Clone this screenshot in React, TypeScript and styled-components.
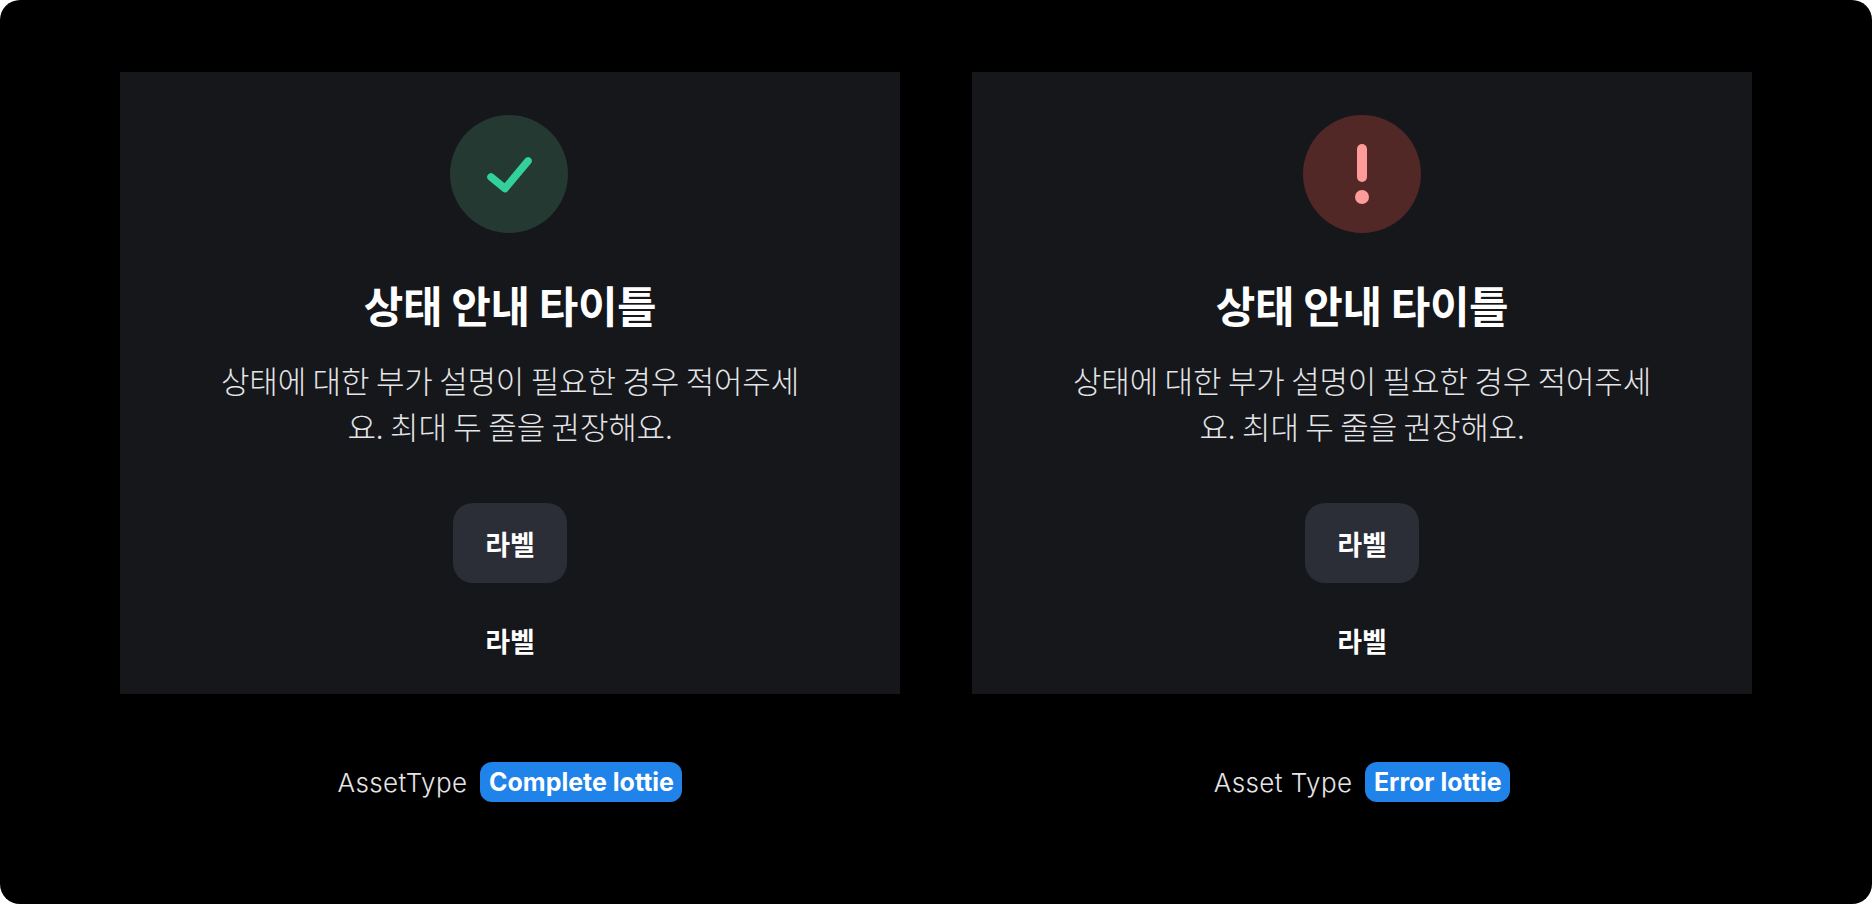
import React from "react";
import styled, { createGlobalStyle } from "styled-components";

const Global = createGlobalStyle`
  html, body { margin: 0; padding: 0; background: #fff; }
  body { font-family: Inter, "Noto Sans CJK KR", sans-serif; }
`;

const Frame = styled.main`
  width: 1872px;
  height: 904px;
  box-sizing: border-box;
  padding: 72px 120px 0;
  background: #000;
  border-radius: 20px;
  display: grid;
  grid-template-columns: 780px 780px;
  column-gap: 72px;
  align-content: start;
`;

const Column = styled.section`
  display: flex;
  flex-direction: column;
  align-items: center;
`;

const Panel = styled.div`
  width: 780px;
  height: 622px;
  box-sizing: border-box;
  padding-top: 43px;
  background: #16171b;
  display: flex;
  flex-direction: column;
  align-items: center;
`;

const Circle = styled.div<{ $bg: string; $nudge: number }>`
  flex: none;
  width: 118px;
  height: 118px;
  margin-right: ${(p) => p.$nudge}px;
  border-radius: 50%;
  background: ${(p) => p.$bg};
  display: flex;
  align-items: center;
  justify-content: center;
`;

const Title = styled.h2`
  margin: 43px 0 0;
  font-family: "Noto Sans CJK KR", sans-serif;
  font-size: 43px;
  line-height: 56px;
  font-weight: 600;
  letter-spacing: -0.45px;
  color: #fff;
`;

const Description = styled.p`
  margin: 25px 0 0;
  width: 590px;
  font-family: "Noto Sans CJK KR", sans-serif;
  font-size: 31px;
  line-height: 46px;
  font-weight: 300;
  text-align: center;
  color: #e4e5e8;
  letter-spacing: -0.2px;
`;

const Primary = styled.button`
  flex: none;
  margin-top: 54px;
  width: 114px;
  height: 80px;
  border: 0;
  border-radius: 20px;
  background: #2c2e37;
  color: #fff;
  font-family: "Noto Sans CJK KR", sans-serif;
  font-size: 27px;
  font-weight: 600;
`;

const Ghost = styled(Primary)`
  margin-top: 17px;
  background: transparent;
`;

const Caption = styled.div`
  margin-top: 68px;
  height: 40px;
  display: flex;
  align-items: center;
  gap: 13px;
`;

const CaptionLabel = styled.span`
  font-size: 26px;
  font-weight: 300;
  color: #e4e5e8;
  letter-spacing: 0.4px;
`;

const Badge = styled.span`
  height: 40px;
  box-sizing: border-box;
  padding: 0 8.5px;
  display: flex;
  align-items: center;
  border-radius: 12px;
  background: #1f83ea;
  color: #fff;
  font-size: 25px;
  font-weight: 700;
`;

const CheckIcon = () => (
  <svg width="48" height="48" viewBox="0 0 48 48" fill="none">
    <path d="M6 27 L20 38.5 L43 11" stroke="#34d09b" strokeWidth="7.5" strokeLinecap="round" strokeLinejoin="round" />
  </svg>
);

const AlertIcon = () => (
  <svg width="20" height="60" viewBox="0 0 20 60">
    <rect x="5" y="0" width="10" height="38" rx="5" fill="#ff9c99" />
    <circle cx="10" cy="53" r="7" fill="#ff9c99" />
  </svg>
);

const Card = ({ bg, nudge, icon, label, badge }: { bg: string; nudge: number; icon: React.ReactNode; label: string; badge: string }) => (
  <Column>
    <Panel>
      <Circle $bg={bg} $nudge={nudge}>{icon}</Circle>
      <Title>상태 안내 타이틀</Title>
      <Description>상태에 대한 부가 설명이 필요한 경우 적어주세요. 최대 두 줄을 권장해요.</Description>
      <Primary>라벨</Primary>
      <Ghost>라벨</Ghost>
    </Panel>
    <Caption>
      <CaptionLabel>{label}</CaptionLabel>
      <Badge>{badge}</Badge>
    </Caption>
  </Column>
);

export default function App() {
  return (
    <>
      <Global />
      <Frame>
        <Card bg="#233931" nudge={2} icon={<CheckIcon />} label="AssetType" badge="Complete lottie" />
        <Card bg="#512826" nudge={0} icon={<AlertIcon />} label="Asset Type" badge="Error lottie" />
      </Frame>
    </>
  );
}
